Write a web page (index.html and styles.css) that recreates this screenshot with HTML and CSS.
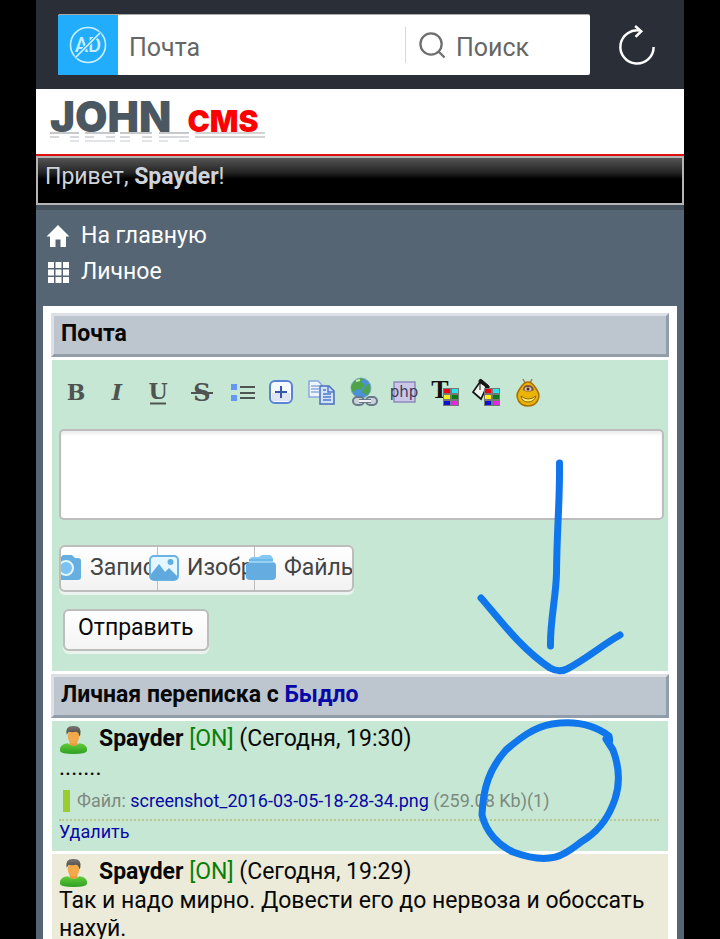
FILE: index.html
```html
<!DOCTYPE html>
<html lang="ru">
<head>
<meta charset="utf-8">
<meta name="viewport" content="width=device-width, initial-scale=1">
<title>Почта</title>
<link rel="stylesheet" href="styles.css">
</head>
<body>
<div class="page">
  <div class="browser">
    <div class="address">
      <button class="adblock" type="button" aria-label="AD">
        <svg viewBox="0 0 60 60"><circle cx="30" cy="30" r="17.500" fill="none" stroke="#c9efff" stroke-width="1.600"/><text x="30" y="37" text-anchor="middle" class="ad-text">AD</text><path d="M17.500 42.500 42.500 17.500" stroke="#22adfc" stroke-width="3.500"/><path d="M17.500 42.500 42.500 17.500" stroke="#d8f5ff" stroke-width="1.600"/></svg>
      </button>
      <a class="address-title" href="#">Почта</a>
      <button class="search" type="button">
        <svg viewBox="0 0 28 28" fill="none" stroke="#6f6f6f" stroke-width="2.400"><circle cx="12.500" cy="12.500" r="11"/><path d="M20 20 26.500 26.500"/></svg>
        Поиск
      </button>
    </div>
    <button class="reload" type="button" aria-label="Обновить">
      <svg viewBox="0 0 40 42" fill="none" stroke="#fff" stroke-width="2.600"><path d="M37.500 23A17.500 17.500 0 1 1 24 6M18 1 24.500 6.500 18.500 12.500"/></svg>
    </button>
  </div>

  <header class="brand">
    <a class="logo" href="#"><span class="logo-john">JOHN</span><span class="logo-cms">CMS</span></a>
    <svg class="logo-shade" viewBox="0 0 217 10" fill="none" stroke-width="1.500">
      <path stroke="#b4b8bb" d="M0 1H29M35 1H65M70 1H102M109 1H139"/>
      <path stroke="#c9cccf" d="M0 5H9M20 5H29M35 5H44M56 5H65M70 5H80M92 5H102M109 5H139"/>
      <path stroke="#d9dbdd" d="M20 9H29M35 9H65M70 9H80M92 9H102M109 9H118M129 9H139"/>
      <path stroke="#c5c5c5" d="M145 1H215M145 5H215"/>
    </svg>
  </header>
  <div class="greeting">Привет, <b>Spayder</b>!</div>

  <nav class="menu">
    <a href="#"><svg viewBox="0 0 24 24" fill="#fff"><path d="M12 1 23.500 12.500H20V23H14.500V15.500H9.500V23H4V12.500H.5Z"/></svg>На главную</a>
    <a href="#"><svg viewBox="0 0 24 24" fill="#fff"><path d="M2 2h6v6H2zM9.500 2h6v6h-6zM17 2h6v6h-6zM2 9.500h6v6H2zM9.500 9.500h6v6h-6zM17 9.500h6v6h-6zM2 17h6v6H2zM9.500 17h6v6h-6zM17 17h6v6h-6z"/></svg>Личное</a>
  </nav>

  <main class="content">
    <h1 class="title">Почта</h1>
    <form class="panel composer">
      <div class="toolbar">
        <button type="button" aria-label="Жирный"><svg viewBox="0 0 30 30"><text x="15" y="23" class="glyph bold">B</text></svg></button>
        <button type="button" aria-label="Курсив"><svg viewBox="0 0 30 30"><text x="15" y="23" class="glyph bold italic">I</text></svg></button>
        <button type="button" aria-label="Подчёркнутый"><svg viewBox="0 0 30 30"><text x="15" y="22" class="glyph bold">U</text><path d="M7 26.500H23" stroke="#505450" stroke-width="2"/></svg></button>
        <button type="button" aria-label="Зачёркнутый"><svg viewBox="0 0 30 30"><text x="18" y="24" class="glyph bold strike">S</text><path d="M7 16H29" stroke="#505450" stroke-width="2"/></svg></button>
        <button type="button" aria-label="Список"><svg viewBox="0 0 30 30"><path fill="#6598f4" d="M6 7h6v6H6zM6 18h6v6H6z"/><path stroke="#505450" stroke-width="2" d="M15 10H30M15 16H30M15 21H30"/></svg></button>
        <button type="button" aria-label="Спойлер"><svg viewBox="0 0 30 30"><rect x="4" y="4" width="22" height="22" rx="5" fill="#f5f8ff" stroke="#5a83d5" stroke-width="2"/><rect x="6" y="16" width="18" height="8" fill="#dfe4f5"/><path d="M15 9V21M9 15H21" stroke="#3257aa" stroke-width="2"/></svg></button>
        <button type="button" aria-label="Копировать"><svg viewBox="0 0 30 30"><g stroke-width="1.500"><path d="M2 4H11L15 8V20H2Z" fill="#edf5ff" stroke="#8aa8df"/><path d="M4 9H12M4 12H12M4 15H12" stroke="#8caada"/><path d="M13 9H22L27 14V27H13Z" fill="#cfe2ff" stroke="#4b6db9"/><path d="M21 9V15H27M16 13H19M16 17H24M16 20H24M16 23H24" fill="none" stroke="#5279c9"/></g></svg></button>
        <button type="button" aria-label="Ссылка"><svg viewBox="0 0 30 30"><circle cx="13" cy="11" r="10" fill="#4b91d8" stroke="#7faab5"/><path d="M5 6Q10 0 16 2L13 5 17 8 12 13 8 12 6 16Q1 11 5 6M17 10 21 7Q24 14 19 18L14 15Z" fill="#4da548"/><path d="M8 4 12 3" stroke="#c5edaf" stroke-width="2"/><g fill="#cbd2da" stroke="#687989" stroke-width="2"><rect x="5" y="20" width="11" height="8" rx="4"/><rect x="18" y="20" width="11" height="8" rx="4"/></g><path d="M11 24H23" stroke="#687989" stroke-width="4"/><path d="M11 24H23" stroke="#eef0f3" stroke-width="2"/></svg></button>
        <button type="button" aria-label="php"><svg viewBox="0 0 30 30"><rect x="5" y="5" width="21" height="20" fill="#cbc7e8" stroke="#9188bd" stroke-width="1.500"/><text x="15" y="20" class="php">php</text></svg></button>
        <button type="button" aria-label="Цвет текста"><svg viewBox="0 0 30 30"><text x="10" y="21" class="glyph tee">T</text><use href="#swatches"/></svg></button>
        <button type="button" aria-label="Цвет фона"><svg viewBox="0 0 30 30"><path d="M9 5 2 15 10 22 16 9Z" fill="#edf5ee" stroke="#151515" stroke-width="1.700"/><path d="M9 5V13M8 5Q8 1 11 3L18 9V18L14 9Z" fill="#151515" stroke="#151515"/><use href="#swatches"/></svg></button>
        <button type="button" aria-label="Смайлы"><svg viewBox="0 0 30 30"><path d="M13 6 11 2M18 6 20 2" stroke="#a8775c" stroke-width="1.500"/><path d="M16 5C21 5 22 9 25 13C30 21 24 29 16 29S2 21 7 13C10 9 11 5 16 5Z" fill="#e9b308" stroke="#a77000" stroke-width="1.500"/><path d="M11 13Q11 8 16 8T22 13Q16 16 11 13Z" fill="#80533f"/><ellipse cx="16" cy="12" rx="3.500" ry="2" fill="#e4c7b6"/><circle cx="16" cy="12" r="1.500" fill="#392b36"/><path d="M9 19Q16 25 24 19Q22 25 16 25T9 19Z" fill="#fff26c" stroke="#986000"/></svg></button>
      </div>
      <textarea aria-label="Сообщение"></textarea>
      <div class="attach">
        <button type="button"><svg viewBox="0 0 30 26"><path d="M3 4Q3 3 5 3H8L11 0H20L23 3H26Q29 3 29 6V22Q29 25 26 25H3Z" fill="#68afe1"/><circle cx="14" cy="13" r="7" fill="#7bc3f0" stroke="#e3f7ff" stroke-width="2"/></svg><span>Записать</span></button>
        <button type="button"><svg viewBox="0 0 30 26"><rect x="1" y="1" width="28" height="24" rx="4" fill="#e4f6ff" stroke="#68b4e5" stroke-width="2"/><path d="M2 19 10 9 16 17 20 13 28 21V25H2Z" fill="#5fa9dc"/><circle cx="21.500" cy="7" r="3" fill="#61afe2"/></svg><span>Изображение</span></button>
        <button type="button"><svg viewBox="0 0 30 26"><path d="M4 4Q4 2 7 2H13L16 0H23Q26 0 27 4V8H4Z" fill="#82c8f2"/><path d="M3 4H27V9H3Z" fill="#6db8e9"/><rect y="7" width="30" height="18" rx="4" fill="#65ade1"/><path d="M3 7H27" stroke="#a6dcf9" stroke-width="1.500"/></svg><span>Файлы</span></button>
      </div>
      <button class="submit" type="submit">Отправить</button>
    </form>

    <h2 class="title">Личная переписка с <a href="#">Быдло</a></h2>
    <article class="panel message">
      <div class="author"><svg viewBox="0 0 30 30"><use href="#avatar"/></svg><span><b>Spayder</b> <span class="online">[ON]</span> (Сегодня, 19:30)</span></div>
      <p>.......</p>
      <div class="file">Файл: <a href="#">screenshot_2016-03-05-18-28-34.png</a> (259.08 Kb)(1)</div>
      <div class="actions"><a href="#">Удалить</a></div>
    </article>
    <article class="panel message alternate">
      <div class="author"><svg viewBox="0 0 30 30"><use href="#avatar"/></svg><span><b>Spayder</b> <span class="online">[ON]</span> (Сегодня, 19:29)</span></div>
      <p>Так и надо мирно. Довести его до нервоза и обоссать нахуй.</p>
    </article>
  </main>
</div>

<svg class="marks" viewBox="0 0 720 939" fill="none" stroke="#1076eb" stroke-width="7" stroke-linecap="round" stroke-linejoin="round">
  <path d="M559.500 463C560 500 557 525 556.500 573C556 598 550 620 550.500 646M481 598C497 616 520 648 550 668Q559 673 567 669C588 658 602 645 620 635"/>
  <path d="M607 740Q611 745 609 736C592 723 571 721 552 724C534 727 520 738 506 750C490 768 483 787 482 815C486 832 498 845 513 852C532 859 550 862 565 853C573 849 579 843 587 838C600 829 610 814 615 799C620 784 619 766 613 750L606 739"/>
</svg>

<svg class="symbols" aria-hidden="true">
  <defs>
    <linearGradient id="shirt" x2="0" y2="1"><stop stop-color="#62cc3a"/><stop offset="1" stop-color="#2e9f22"/></linearGradient>
    <linearGradient id="hair" x2="0" y2="1"><stop stop-color="#777"/><stop offset="1" stop-color="#493b30"/></linearGradient>
    <g id="swatches"><path fill="#777" d="M13 11h16v18H13z"/><path fill="#f00018" d="M14 12h6v4h-6z"/><path fill="#28e5ed" d="M22 12h6v4h-6z"/><path fill="#ffed19" d="M14 18h6v4h-6z"/><path fill="#087c19" d="M22 18h6v4h-6z"/><path fill="#1010d0" d="M14 24h6v4h-6z"/><path fill="#e128df" d="M22 24h6v4h-6z"/></g>
    <g id="avatar"><path d="M1 27Q0 20 9 19Q15 24 21 19Q30 20 29 27Q28 30 15 30T1 27Z" fill="url(#shirt)"/><path d="M11 16H19V20Q15 24 11 20Z" fill="#e69a39"/><ellipse cx="15" cy="11.500" rx="6" ry="8" fill="#f1a94c"/><path d="M8 10Q6 1 14 1Q24 0 22 10L21 12Q21 8 18 7Q13 8 10 7Z" fill="url(#hair)"/></g>
  </defs>
</svg>
</body>
</html>
```
FILE: styles.css
```css
* { box-sizing: border-box; }
html { background: #000; }
body {
  position: relative;
  margin: 0;
  padding: 0 5%;
  overflow-x: hidden;
  font: 23px/28px Roboto, "Liberation Sans", sans-serif;
  color: #080808;
}
button { margin: 0; padding: 0; border: 0; background: none; font: inherit; color: inherit; }
a { color: #0808a8; text-decoration: none; }
svg { display: block; flex: none; }
.page { background: #566573; min-height: 100vh; }

.browser {
  display: flex;
  align-items: center;
  height: 89px;
  padding: 0 28px 0 22px;
  gap: 28px;
  background: #2a2e36;
}
.address {
  display: flex;
  flex: 1;
  height: 61px;
  border-top: 1px solid #aaa;
  border-radius: 2px;
  overflow: hidden;
  background: #fff;
  color: #666;
  font-size: 25px;
}
.adblock { width: 60px; background: #22adfc; }
.adblock svg { width: 60px; height: 60px; }
.ad-text { font: 500 20px Roboto, sans-serif; fill: #c9efff; }
.address-title { flex: 1; padding: 19px 11px; color: #666; }
.search {
  display: flex;
  align-items: center;
  gap: 10px;
  width: 185px;
  padding: 6px 14px 0;
  background: linear-gradient(#d8d8d8, #d8d8d8) 0 12px / 1px 36px no-repeat;
}
.search svg { width: 27px; height: 27px; margin-bottom: 6px; }
.reload svg { width: 38px; height: 42px; }

.brand { height: 67px; padding: 13px 14px 0; border-bottom: 2px solid #dc1010; background: #fff; }
.logo { display: flex; align-items: baseline; gap: 16px; height: 30px; font: 900 42px/30px Inter, "DejaVu Sans", sans-serif; }
.logo-john { color: #4b5862; }
.logo-cms { color: #f00; font-size: 30px; }
.logo-shade { width: 217px; height: 10px; }

.greeting {
  height: 49px;
  padding: 5px 7px;
  border: 2px solid #b5b5b5;
  background: linear-gradient(#555, #222 15px, #000 21px);
  color: #ced4da;
}
.menu { padding: 8px 10px 16px; border-top: 5px solid #44505c; }
.menu a { display: flex; align-items: center; gap: 11px; height: 36px; color: #fff; }
.menu svg { width: 24px; height: 24px; }

.content { margin: 0 7px; padding: 7px 8px 0; background: #fff; }
.title {
  margin: 0;
  padding: 4px 7px 6px;
  border: 3px solid;
  border-color: #dce0e4 #919da9 #919da9 #dce0e4;
  background: #bdc5ce;
  font-size: 23px;
  line-height: 28px;
}
.panel { margin: 3px 1px; background: #c6e7d4; }
.composer { padding: 17px 4px 20px 7px; }
.toolbar { display: flex; align-items: center; gap: 11px; height: 30px; padding-left: 2px; }
.toolbar svg { width: 30px; height: 30px; }
.glyph { font: 22px "DejaVu Serif", serif; fill: #505450; text-anchor: middle; }
.bold { font-weight: bold; }
.italic { font-style: italic; }
.strike { font-size: 24px; }
.tee { font: bold 26px "Liberation Serif", serif; fill: #111; }
.php { font: 15px "DejaVu Sans", sans-serif; fill: #3f3c58; text-anchor: middle; }
textarea {
  display: block;
  width: 100%;
  height: 91px;
  margin: 22px 0 25px;
  border: 2px solid #bdbdbd;
  border-radius: 5px;
  background: #fff;
  box-shadow: inset 0 3px 3px #eee;
  resize: none;
  font: inherit;
}
.attach {
  display: flex;
  width: 295px;
  height: 47px;
  border: 2px solid #bdbdbd;
  border-radius: 6px;
  overflow: hidden;
  background: linear-gradient(#fff, #f2f2f2);
  box-shadow: 0 3px 0 #eaf3ed;
  color: #444;
}
.attach button { position: relative; display: flex; align-items: center; flex: 1; min-width: 0; gap: 8px; padding-bottom: 2px; }
.attach button + button { box-shadow: -1px 0 #bdbdbd; }
.attach svg { width: 30px; height: 26px; margin-left: -9px; }
.attach span { flex: 1; min-width: 0; overflow: hidden; white-space: nowrap; text-align: left; }
.submit {
  display: block;
  margin: 17px 4px 0;
  padding: 3px 13px 7px;
  border: 2px solid #bdbdbd;
  border-radius: 6px;
  background: linear-gradient(#fff, #f4f4f4);
  box-shadow: 0 3px 0 #eaf3ed;
}

.message { padding: 3px 9px 8px 7px; }
.author { display: flex; align-items: center; gap: 11px; height: 30px; }
.author svg { width: 29px; height: 29px; }
.online { color: #087f08; }
.message p { margin: 0; }
.file {
  margin: 8px 0 7px 4px;
  padding-left: 7px;
  border-left: 7px solid #9acd32;
  color: #7d8a80;
  font-size: 18px;
  line-height: 22px;
}
.actions { border-top: 2px dotted #b9c68c; font-size: 18px; line-height: 22px; }
.alternate { background: #ecebd9; }

.marks { position: absolute; top: 0; left: 0; width: 100%; pointer-events: none; }
.symbols { position: absolute; width: 0; height: 0; }
```
